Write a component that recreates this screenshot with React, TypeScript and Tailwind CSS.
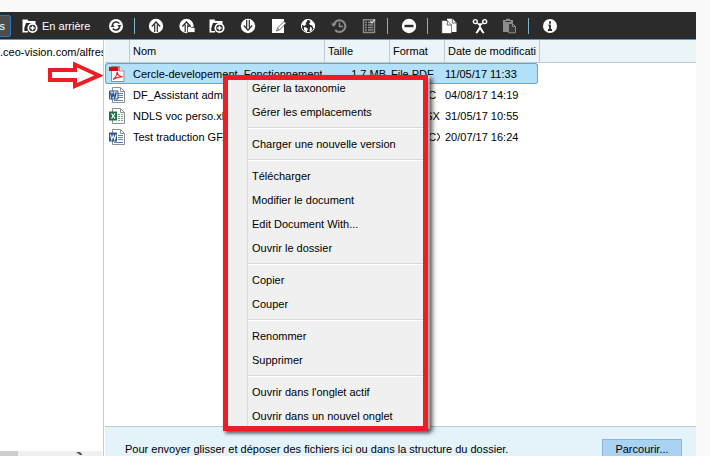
import type { ReactNode } from "react";

const DARK = "#2b2b2b";

function Svg({ children, dim }: { children: ReactNode; dim?: boolean }) {
  return (
    <svg width="16" height="16" viewBox="0 0 16 16" className={dim ? "block text-[#8c8c8c]" : "block text-white"} fill="none" aria-hidden="true">
      {children}
    </svg>
  );
}

const FolderPlus = () => (
  <Svg>
    <path d="M.5 1.500h5l1 1.500h7v4H12V5H4L2.300 10v3H6v1.500H.5z" fill="currentColor" />
    <circle cx="10.500" cy="10" r="4.200" fill={DARK} stroke="currentColor" strokeWidth="1.800" />
    <path d="M8.300 10h4.400M10.500 7.800v4.400" stroke="currentColor" strokeWidth="1.500" />
  </Svg>
);
const Refresh = () => (
  <Svg>
    <circle cx="8" cy="8" r="7" fill="currentColor" />
    <path d="M4.300 7a4 4 0 0 1 7-1.500M11.700 9a4 4 0 0 1-7 1.500" stroke={DARK} strokeWidth="1.500" />
    <path d="M2.500 9l2-2.800L6.800 9zM13.500 7l-2 2.800L9.200 7z" fill={DARK} />
  </Svg>
);
const Upload = () => (
  <Svg>
    <circle cx="8" cy="8" r="7.200" fill="currentColor" />
    <path d="M3.800 8.500L8 4l4.200 4.500M6.700 6.500V14M9.300 6.500V14" stroke={DARK} strokeWidth="1.200" />
  </Svg>
);
const UploadFolder = () => (
  <Svg>
    <circle cx="7.500" cy="8" r="7.200" fill="currentColor" />
    <path d="M3.300 8.500L7.500 4l4.200 4.500M6.200 6.500V14M8.800 6.500V10" stroke={DARK} strokeWidth="1.200" />
    <path d="M8.500 8.500h3l1 1H16v5H8.500z" fill="currentColor" stroke={DARK} strokeWidth=".8" />
  </Svg>
);
const Download = () => (
  <Svg>
    <circle cx="8" cy="8" r="7.200" fill="currentColor" />
    <path d="M3.800 7.500L8 12l4.200-4.500M6.700 9.500V2M9.300 9.500V2" stroke={DARK} strokeWidth="1.200" />
  </Svg>
);
const Edit = () => (
  <Svg>
    <path d="M2 1h12v14H2z" fill="currentColor" />
    <path d="M6.500 13l1-3 6.500-6.500 1.800 1.800L9.500 12z" fill="#fff" stroke="#6b6b6b" />
    <path d="M7.500 10l2 2" stroke="#6b6b6b" />
  </Svg>
);
const Globe = () => (
  <Svg>
    <circle cx="8" cy="8" r="6.600" stroke="currentColor" strokeWidth="1" />
    <path d="M2 4.500L5 1.800l2.500.2-.8 2L5.500 5l.8 1.300L4.500 8 2 7zM9 2l3 .7L14.500 6l.2 3.500-1.500.8-1-2.800-2.200-.5L9 5.500l1.500-1.200zM4 9l3 .7.8 1.500L6.500 14.500l-2.500-2.500zM10 9l1.500.5.5 2-1.300 2.300-1-1z" fill="currentColor" />
  </Svg>
);
const HistoryIcon = () => (
  <Svg dim>
    <path d="M2.700 8a5.800 5.800 0 1 1 1.500 4" stroke="currentColor" strokeWidth="2" />
    <path d="M0 5.500h5.500L2.700 9z" fill="currentColor" />
    <path d="M8.500 4.500V8.500H12" stroke="currentColor" strokeWidth="1.500" />
  </Svg>
);
const Tasks = () => (
  <Svg dim>
    <path d="M2.500 1.700h11v12.800h-11z" stroke="currentColor" strokeWidth="1.400" />
    <path d="M4 4.500h2M7 4.500h4M4 7h2M7 7h5M4 9.500h2M7 9.500h5M4 12h2M7 12h5" stroke="currentColor" strokeWidth="1.300" />
    <path d="M9.500 3l1.500 2 3-3.500" stroke="#ddd" strokeWidth="1.200" />
  </Svg>
);
const Minus = () => (
  <Svg>
    <circle cx="8" cy="8" r="7.200" fill="currentColor" />
    <path d="M3.500 8h9" stroke={DARK} strokeWidth="2.400" />
  </Svg>
);
const Copy = () => (
  <Svg>
    <path d="M6 .8h5.500L15.500 5v9H6z" fill="currentColor" />
    <path d="M.8 2.500h5.500L10.500 7v8.500H.8z" fill="currentColor" stroke={DARK} strokeWidth=".6" />
    <path d="M6.300 2.500V7h4.200M11.300 1v4h4" stroke={DARK} strokeWidth=".7" />
  </Svg>
);
const Cut = () => (
  <Svg>
    <circle cx="3.300" cy="3.600" r="2" stroke="currentColor" strokeWidth="1.400" />
    <circle cx="12.700" cy="3.600" r="2" stroke="currentColor" strokeWidth="1.400" />
    <path d="M4.700 5.300L7.200 7 12 15l-1.500-.3L8 10.500l-2.500 4.200L4 15l4.800-8 2.500-1.700" fill="currentColor" stroke="currentColor" />
  </Svg>
);
const Paste = () => (
  <Svg dim>
    <path d="M1 2h3V.8h4V2h3v3H6v9H1z" fill="currentColor" />
    <path d="M3.500 3.500h5" stroke={DARK} />
    <path d="M6.500 5.500h4l3 3v6.300h-7zM10.500 5.500v3h3" fill="#3b3b3b" stroke="currentColor" />
  </Svg>
);
const Info = () => (
  <Svg>
    <circle cx="8" cy="8" r="7" fill="currentColor" />
    <path d="M8 3.300v2.400M6.500 7.300H8V12M6 12h4" stroke={DARK} strokeWidth="1.800" />
  </Svg>
);

function IconButton({ label, children }: { label: string; children: ReactNode }) {
  return (
    <button type="button" aria-label={label} className="block shrink-0">
      {children}
    </button>
  );
}

const Divider = () => <span className="h-4 w-px shrink-0 bg-[#7fb4c8]" />;

function PdfIcon() {
  return (
    <svg width="16" height="16" viewBox="0 0 16 16" fill="none" aria-hidden="true">
      <path d="M2.500.5h8l4.500 4.500v10.500H2.500z" fill="#fff" stroke="#8f8f8f" />
      <path d="M10.500.5V5H15" fill="#eee" stroke="#8f8f8f" />
      <path d="M0 1h9.500v4H0z" fill="#cc1111" />
      <path d="M4 13.500c2-1.500 4-4.500 4-7.500 1 3.500 3 5 6 5-3-.5-7 .5-10 2.500z" stroke="#e03028" strokeWidth="1.100" />
    </svg>
  );
}

function OfficeIcon({ kind }: { kind: "doc" | "xls" | "docx" }) {
  const color = kind === "xls" ? "#1e7145" : "#2a5699";
  return (
    <svg width="16" height="16" viewBox="0 0 16 16" fill="none" aria-hidden="true">
      <path d="M3.500.5h8l4 4v11h-12z" fill="#fff" stroke="#8f8f8f" />
      <path d="M11.500.5v4h4" stroke="#8f8f8f" />
      {kind === "xls" ? (
        <path d="M9 6.500h2M12 6.500h2M9 8.500h2M12 8.500h2M9 10.500h2M12 10.500h2M9 12.500h2M12 12.500h2" stroke="#6fa888" />
      ) : (
        <path d="M9 6.500h5M9 8.500h5M9 10.500h5M5 13.500h9" stroke="#6482b0" />
      )}
      {kind === "doc" ? (
        <path d="M.5 4h8.500v8H.5z" fill="#dfe9f7" stroke={color} />
      ) : (
        <path d="M0 3.500h8v9H0z" fill={color} />
      )}
      {kind === "xls" ? (
        <path d="M2.500 5.500l3.500 5M6 5.500l-3.500 5" stroke="#fff" strokeWidth="1.300" />
      ) : (
        <path d="M1.500 5.500l1.200 5L4.200 6.500l1.500 4L7.200 5.500" stroke={kind === "doc" ? color : "#fff"} strokeWidth={kind === "doc" ? "1.500" : "1.100"} />
      )}
    </svg>
  );
}

const files = [
  { icon: <PdfIcon />, name: "Cercle-developement_Fonctionnement.pdf", size: "1,7 MB", format: "File PDF", date: "11/05/17 11:33" },
  { icon: <OfficeIcon kind="doc" />, name: "DF_Assistant administratif.doc", size: "", format: "File DOC", date: "04/08/17 14:19" },
  { icon: <OfficeIcon kind="xls" />, name: "NDLS voc perso.xlsx", size: "", format: "File XLSX", date: "31/05/17 10:55" },
  { icon: <OfficeIcon kind="docx" />, name: "Test traduction GF.docx", size: "", format: "File DOCX", date: "20/07/17 16:24" },
];

const menu = [
  ["Gérer la taxonomie", "Gérer les emplacements"],
  ["Charger une nouvelle version"],
  ["Télécharger", "Modifier le document", "Edit Document With...", "Ouvrir le dossier"],
  ["Copier", "Couper"],
  ["Renommer", "Supprimer"],
  ["Ouvrir dans l'onglet actif", "Ouvrir dans un nouvel onglet"],
];

function Toolbar() {
  return (
    <div className="flex h-7 shrink-0 items-center border-b border-[#4a9de0] bg-[#2b2b2b]">
      <button type="button" className="flex h-[22px] w-[11px] shrink-0 items-center justify-end rounded-r-[3px] border border-l-0 border-[#2a78bd] bg-[#4d4d4d] pr-[5px] text-white">
        s
      </button>
      <button type="button" className="ml-[11px] flex shrink-0 items-center gap-1 whitespace-nowrap text-white">
        <FolderPlus />
        En arrière
      </button>
      <div className="ml-[18px] flex shrink-0 items-center gap-[10px]">
        <IconButton label="Actualiser"><Refresh /></IconButton>
        <Divider />
      </div>
      <div className="ml-[13px] flex w-[229px] shrink-0 items-center justify-between">
        <IconButton label="Envoyer"><Upload /></IconButton>
        <IconButton label="Envoyer un dossier"><UploadFolder /></IconButton>
        <IconButton label="Nouveau dossier"><FolderPlus /></IconButton>
        <IconButton label="Télécharger"><Download /></IconButton>
        <IconButton label="Modifier"><Edit /></IconButton>
        <IconButton label="Ouvrir en ligne"><Globe /></IconButton>
        <IconButton label="Historique"><HistoryIcon /></IconButton>
        <IconButton label="Tâches"><Tasks /></IconButton>
      </div>
      <div className="ml-[10px] flex shrink-0 items-center">
        <Divider />
        <div className="mr-[10px] ml-[13px]"><IconButton label="Supprimer"><Minus /></IconButton></div>
        <Divider />
      </div>
      <div className="mr-[10px] ml-[13px] flex w-[77px] shrink-0 items-center justify-between">
        <IconButton label="Copier"><Copy /></IconButton>
        <IconButton label="Couper"><Cut /></IconButton>
        <IconButton label="Coller"><Paste /></IconButton>
      </div>
      <Divider />
      <div className="ml-[13px]"><IconButton label="Informations"><Info /></IconButton></div>
    </div>
  );
}

function FileTable() {
  const head = "h-[23px] overflow-hidden border-r border-b border-[#c0c8d0] pl-[3px] text-left font-normal whitespace-nowrap";
  return (
    <table className="w-full table-fixed border-separate border-spacing-0">
      <colgroup>
        <col className="w-[25px]" />
        <col className="w-[195px]" />
        <col className="w-[65px]" />
        <col className="w-[55px]" />
        <col className="w-[95px]" />
        <col />
      </colgroup>
      <thead className="bg-[#ebf4f8]">
        <tr>
          <th className={head} aria-label="Type" />
          <th className={head}>Nom</th>
          <th className={head}>Taille</th>
          <th className={head}>Format</th>
          <th className={head}>Date de modificati</th>
          <td className="border-b border-[#c0c8d0]" />
        </tr>
      </thead>
      <tbody>
        {files.map((f, i) => {
          const cell = i === 0
            ? "flex h-[21px] items-center overflow-hidden whitespace-nowrap border-y border-[#4cabee] bg-[#b3e1fa]"
            : "flex h-[21px] items-center overflow-hidden whitespace-nowrap";
          return (
            <tr key={f.name}>
              <td className="p-0"><div className={`${cell} pl-[3px] ${i === 0 ? "rounded-l-[3px] border-l" : "border-l border-transparent"}`}>{f.icon}</div></td>
              <td className="p-0"><div className={`${cell} pr-[3px] pl-[3px]`}><span className="overflow-hidden">{f.name}</span></div></td>
              <td className="p-0"><div className={`${cell} justify-end pr-1`}>{f.size}</div></td>
              <td className="p-0"><div className={`${cell} pr-[5px] pl-px`}><span className="overflow-hidden">{f.format}</span></div></td>
              <td className="p-0 pr-[2px]"><div className={`${cell} ${i === 0 ? "rounded-r-[3px] border-r" : ""}`}>{f.date}</div></td>
              <td className="p-0" />
            </tr>
          );
        })}
      </tbody>
    </table>
  );
}

function ContextMenu() {
  return (
    <div className="absolute top-[75px] left-[223px] w-[207px] pb-[3px]">
      <ul role="menu" className="border-t border-r border-b border-[#c8c8c8] bg-[#f0f0f0] shadow-[3px_3px_4px_rgba(0,0,0,0.5)]">
        {menu.map((group, g) => (
          <li key={g} role="none" className="ml-6 border-l border-[#dadada]">
            {g > 0 && <hr className="mt-0 mb-1 h-1 border-0 border-b border-[#d8d8d8] shadow-[0_1px_0_#ffffff]" />}
            {group.map((label) => (
              <button key={label} role="menuitem" type="button" className="block h-6 w-full pl-1 text-left whitespace-nowrap">
                {label}
              </button>
            ))}
          </li>
        ))}
      </ul>
      <div className="pointer-events-none absolute top-0 left-0 h-[356px] w-[205px] border-5 border-[#ee1c25] shadow-[2px_3px_3px_rgba(0,0,0,0.35)]" />
    </div>
  );
}

export default function App() {
  return (
    <div className="relative h-screen overflow-hidden bg-[#f9f9f9] pt-3 pr-[14px] font-['Liberation_Sans',Arial,sans-serif] text-[11px] leading-4 text-black">
      <div className="flex h-full flex-col bg-white">
        <Toolbar />
        <div className="flex min-h-0 flex-1">
          <aside className="flex w-[104px] shrink-0 flex-col justify-between border-r border-[#c9cad6]">
            <p className="overflow-hidden pt-1 whitespace-nowrap">.ceo-vision.com/alfresco</p>
            <div className="mr-px flex h-[5px] items-end bg-[#f0f0f0]">
              <span className="h-full w-[18px] bg-[#cdcdcd]" />
              <svg width="7" height="4" viewBox="0 0 7 4" className="ml-[58px]" aria-hidden="true">
                <path d="M0 0h4l2 2v1H4z" fill="#555" />
              </svg>
            </div>
          </aside>
          <main className="ml-px flex min-w-0 flex-1 flex-col">
            <div className="min-h-0 flex-1">
              <FileTable />
            </div>
            <footer className="flex h-[30px] shrink-0 items-start justify-between overflow-hidden border-t border-[#bdc8d6] bg-[#e4f2fa] pt-3 pr-[14px] pl-5">
              <p className="pt-[2px] whitespace-nowrap">Pour envoyer glisser et déposer des fichiers ici ou dans la structure du dossier.</p>
              <button type="button" className="h-5 w-20 shrink-0 border border-[#8fb5d3] bg-[#aad2f2]">Parcourir...</button>
            </footer>
          </main>
        </div>
      </div>
      <svg width="56" height="30" viewBox="0 0 56 30" className="pointer-events-none absolute top-[60px] left-[47px]" fill="none" aria-hidden="true">
        <path d="M3 10h25V4.500L52 15.500 28 26v-6H3z" stroke="#ee1c25" strokeWidth="4" />
      </svg>
      <ContextMenu />
    </div>
  );
}
